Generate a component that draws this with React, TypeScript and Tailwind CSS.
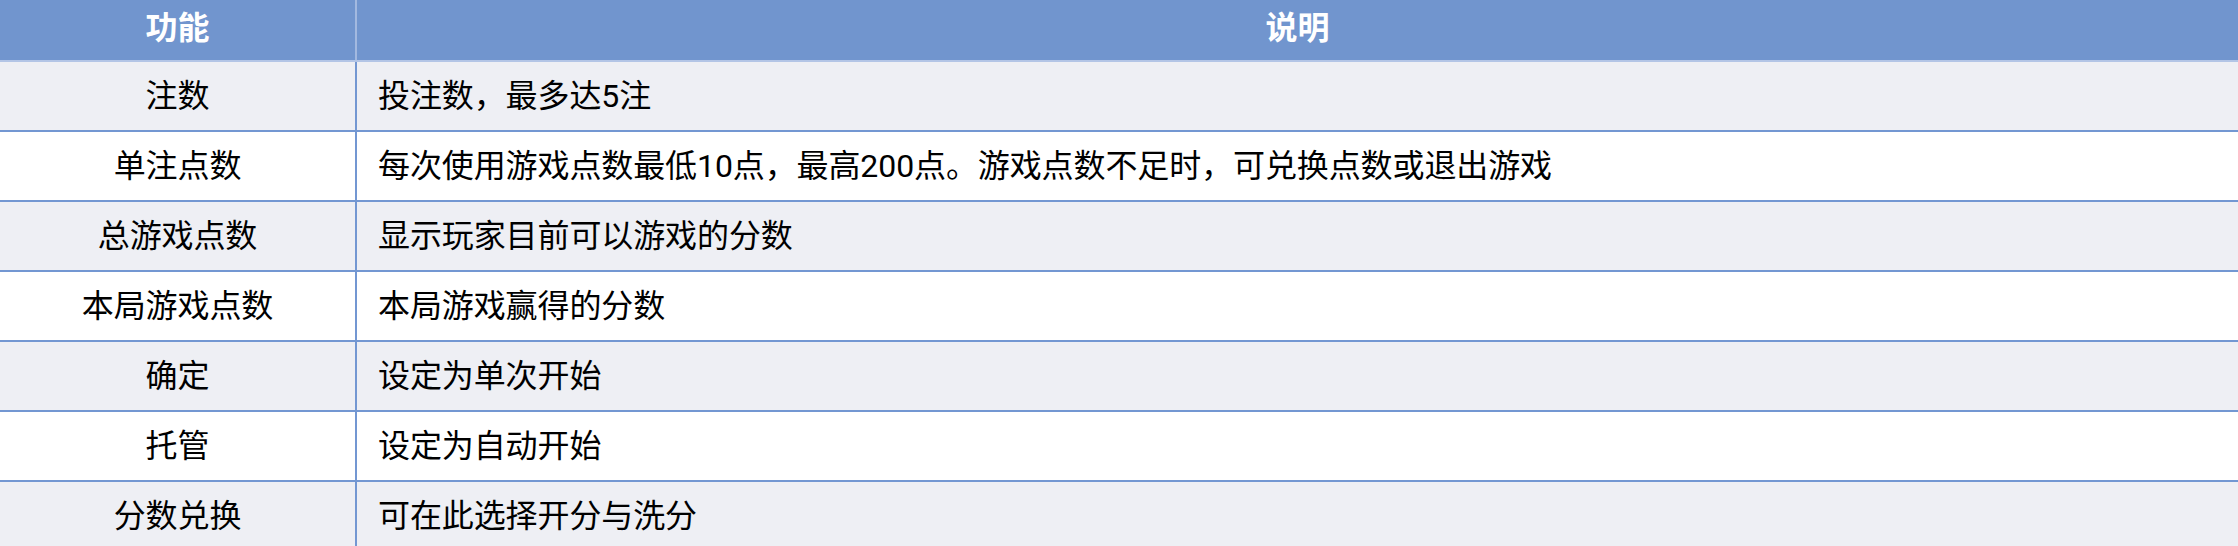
const rows: { name: string; desc: string }[] = [
  { name: "注数", desc: "投注数，最多达5注" },
  {
    name: "单注点数",
    desc: "每次使用游戏点数最低10点，最高200点。游戏点数不足时，可兑换点数或退出游戏",
  },
  { name: "总游戏点数", desc: "显示玩家目前可以游戏的分数" },
  { name: "本局游戏点数", desc: "本局游戏赢得的分数" },
  { name: "确定", desc: "设定为单次开始" },
  { name: "托管", desc: "设定为自动开始" },
  { name: "分数兑换", desc: "可在此选择开分与洗分" },
];

export default function App() {
  return (
    <div
      className="w-[2238px] h-[546px] overflow-hidden bg-white text-black"
      style={{ fontFamily: 'Roboto, "Noto Sans CJK SC", sans-serif' }}
    >
      {/* header */}
      <div className="flex h-[62px] bg-[#7195ce] border-b-2 border-[#b3c5e6] text-white font-bold text-[32px]">
        <div className="w-[357px] shrink-0 flex items-center justify-center border-r-2 border-[#a3b9e0] pb-[5px]">
          功能
        </div>
        <div className="flex-1 flex items-center justify-center pb-[5px]">说明</div>
      </div>

      {rows.map((row, i) => (
        <div
          key={row.name}
          className={
            "flex h-[70px] border-b-2 border-[#7397d2] text-[32px] tracking-[-0.1px] " +
            (i % 2 === 0 ? "bg-[#eeeff4]" : "bg-white")
          }
        >
          <div className="w-[357px] shrink-0 flex items-center justify-center border-r-2 border-[#7397d2]">
            {row.name}
          </div>
          <div className="flex-1 flex items-center pl-[21px]">{row.desc}</div>
        </div>
      ))}
    </div>
  );
}
